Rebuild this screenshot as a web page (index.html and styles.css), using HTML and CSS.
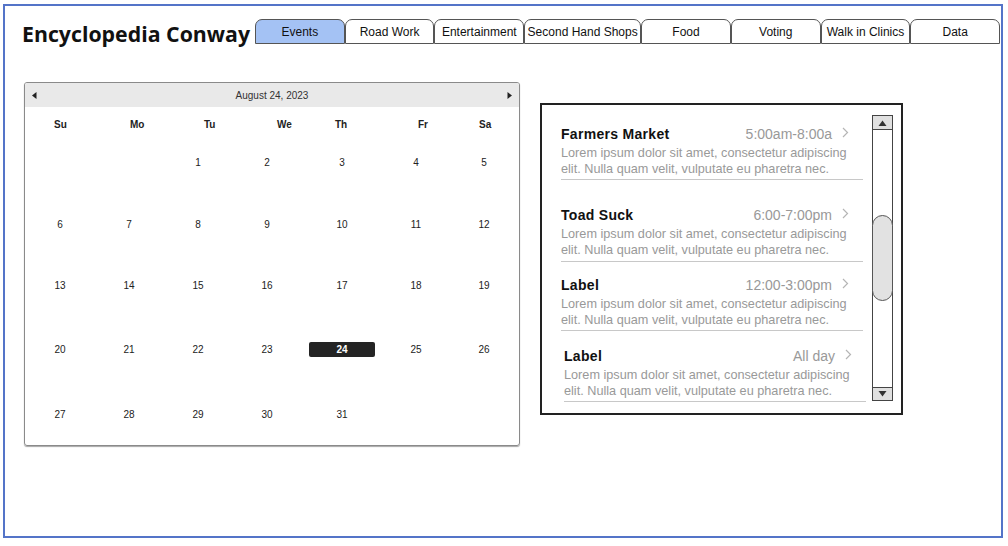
FILE: index.html
```html
<!DOCTYPE html>
<html lang="en">
<head>
    <meta charset="UTF-8">
    <meta name="viewport" content="width=device-width, initial-scale=1.0">
    <title>Encyclopedia Conway</title>
    <link rel="stylesheet" href="styles.css">
</head>
<body>
    <div class="frame">
        <header class="top">
            <h1 class="brand">Encyclopedia Conway</h1>
            <nav class="tabs">
                <a class="tab active">Events</a>
                <a class="tab">Road Work</a>
                <a class="tab">Entertainment</a>
                <a class="tab wide">Second Hand Shops</a>
                <a class="tab">Food</a>
                <a class="tab">Voting</a>
                <a class="tab">Walk in Clinics</a>
                <a class="tab">Data</a>
            </nav>
        </header>

        <main class="content">
            <section class="calendar">
                <div class="cal-head">
                    <svg class="cal-arrow" width="5" height="7" viewBox="0 0 5 7"><path d="M4.5 0 L0 3.5 L4.5 7 Z" fill="#222"/></svg>
                    <span class="cal-title">August 24, 2023</span>
                    <svg class="cal-arrow" width="5" height="7" viewBox="0 0 5 7"><path d="M0.5 0 L5 3.5 L0.5 7 Z" fill="#222"/></svg>
                </div>
                <div class="weekdays">
                    <span>Su</span><span>Mo</span><span>Tu</span><span>We</span><span>Th</span><span>Fr</span><span>Sa</span>
                </div>
                <div class="days">
                    <span></span><span></span><span>1</span><span>2</span><span>3</span><span>4</span><span>5</span>
                    <span>6</span><span>7</span><span>8</span><span>9</span><span>10</span><span>11</span><span>12</span>
                    <span>13</span><span>14</span><span>15</span><span>16</span><span>17</span><span>18</span><span>19</span>
                    <span>20</span><span>21</span><span>22</span><span>23</span><span><b class="selected">24</b></span><span>25</span><span>26</span>
                    <span>27</span><span>28</span><span>29</span><span>30</span><span>31</span><span></span><span></span>
                </div>
            </section>

            <section class="events">
                <div class="event-list">
                    <div class="event first">
                        <div class="event-top">
                            <span class="event-name">Farmers Market</span>
                            <span class="event-time">5:00am-8:00a</span>
                            <svg class="chev" width="7" height="11" viewBox="0 0 7 11"><path d="M1 1 L5.5 5.5 L1 10" fill="none" stroke="#b5b5b5" stroke-width="1.2"/></svg>
                        </div>
                        <p class="event-desc">Lorem ipsum dolor sit amet, consectetur adipiscing elit. Nulla quam velit, vulputate eu pharetra nec.</p>
                    </div>
                    <div class="event second">
                        <div class="event-top">
                            <span class="event-name">Toad Suck</span>
                            <span class="event-time">6:00-7:00pm</span>
                            <svg class="chev" width="7" height="11" viewBox="0 0 7 11"><path d="M1 1 L5.5 5.5 L1 10" fill="none" stroke="#b5b5b5" stroke-width="1.2"/></svg>
                        </div>
                        <p class="event-desc">Lorem ipsum dolor sit amet, consectetur adipiscing elit. Nulla quam velit, vulputate eu pharetra nec.</p>
                    </div>
                    <div class="event">
                        <div class="event-top">
                            <span class="event-name">Label</span>
                            <span class="event-time">12:00-3:00pm</span>
                            <svg class="chev" width="7" height="11" viewBox="0 0 7 11"><path d="M1 1 L5.5 5.5 L1 10" fill="none" stroke="#b5b5b5" stroke-width="1.2"/></svg>
                        </div>
                        <p class="event-desc">Lorem ipsum dolor sit amet, consectetur adipiscing elit. Nulla quam velit, vulputate eu pharetra nec.</p>
                    </div>
                    <div class="event shifted">
                        <div class="event-top">
                            <span class="event-name">Label</span>
                            <span class="event-time">All day</span>
                            <svg class="chev" width="7" height="11" viewBox="0 0 7 11"><path d="M1 1 L5.5 5.5 L1 10" fill="none" stroke="#b5b5b5" stroke-width="1.2"/></svg>
                        </div>
                        <p class="event-desc">Lorem ipsum dolor sit amet, consectetur adipiscing elit. Nulla quam velit, vulputate eu pharetra nec.</p>
                    </div>
                </div>

                <div class="scrollbar">
                    <div class="sb-btn up">
                        <svg width="9" height="6" viewBox="0 0 9 6"><path d="M0.5 6 L4.5 0.5 L8.5 6 Z" fill="#333"/></svg>
                    </div>
                    <div class="sb-track">
                        <div class="sb-thumb"></div>
                    </div>
                    <div class="sb-btn down">
                        <svg width="9" height="6" viewBox="0 0 9 6"><path d="M0.5 0 L4.5 5.5 L8.5 0 Z" fill="#333"/></svg>
                    </div>
                </div>
            </section>
        </main>
    </div>
</body>
</html>
```

FILE: styles.css
```css
* {
    margin: 0;
    padding: 0;
    box-sizing: border-box;
}

body {
    background: white;
    font-family: 'Liberation Sans', Arial, sans-serif;
    color: #222;
}

.frame {
    width: 1000px;
    height: 534px;
    margin: 4px 0 0 3px;
    border: 2px solid #5474c8;
}

/* header: title + tabs */
.top {
    display: flex;
    align-items: flex-end;
    padding: 13px 1px 0 17px;
}

.brand {
    font-family: 'Open Sans', sans-serif;
    font-size: 21.3px;
    font-weight: 700;
    color: #111;
    line-height: 26px;
    margin-bottom: -3px;
    width: 233px;
    white-space: nowrap;
}

.tabs {
    display: flex;
    flex: 1;
}

.tab {
    flex: 1 1 0;
    height: 25px;
    line-height: 24px;
    text-align: center;
    font-size: 12px;
    color: #111;
    background: white;
    border: 1px solid #555;
    border-radius: 7px 7px 0 0;
    white-space: nowrap;
}

.tab.wide {
    flex: 0 0 117px;
}

.tab.active {
    background: #a4c2f4;
}

/* main area */
.content {
    display: flex;
    align-items: flex-start;
    padding: 38px 0 0 19px;
}

.calendar {
    width: 496px;
    border: 1px solid #8a8a8a;
    border-radius: 3px;
    box-shadow: 0 1px 1px rgba(0, 0, 0, 0.35);
}

.cal-head {
    display: flex;
    align-items: center;
    justify-content: space-between;
    height: 24px;
    padding: 0 7px;
    background: #e9e9e9;
    border-radius: 2px 2px 0 0;
}

.cal-title {
    font-size: 10px;
    color: #333;
}

.weekdays {
    display: grid;
    grid-template-columns: 76px 74px 73px 58px 83px 61px 1fr;
    padding: 12px 0 0 29px;
    font-size: 10px;
    font-weight: 700;
    line-height: 12px;
    color: #222;
}

.days {
    display: grid;
    grid-template-columns: 70px 68px 70px 68px 82px 66px 1fr;
    grid-template-rows: 62px 62px 60px 68px 62px;
    align-items: center;
    justify-items: center;
    font-size: 10px;
    color: #222;
}

.selected {
    display: inline-block;
    width: 66px;
    height: 15px;
    line-height: 15px;
    text-align: center;
    background: #242424;
    color: white;
    border-radius: 2px;
}

/* event list panel */
.events {
    display: flex;
    width: 363px;
    height: 312px;
    margin: 21px 0 0 20px;
    border: 2px solid #222;
    overflow: hidden;
}

.event-list {
    width: 302px;
    margin-left: 19px;
}

.event {
    padding: 14px 0 2px;
    border-bottom: 1px solid #c8c8c8;
}

.event.first {
    padding-top: 20px;
}

.event.second {
    padding-top: 26px;
    padding-bottom: 3px;
}

.event.shifted {
    padding-top: 16px;
    margin-left: 3px;
    margin-right: -3px;
}

.event-top {
    display: flex;
    align-items: center;
    height: 18px;
    margin-bottom: 2px;
    padding-right: 14px;
}

.event-name {
    flex: 1;
    font-size: 14px;
    font-weight: 700;
    letter-spacing: 0.3px;
    color: #111;
}

.event-time {
    font-size: 14px;
    color: #999;
}

.chev {
    margin: -4px 0 0 10px;
}

.event-desc {
    font-size: 12.7px;
    line-height: 16px;
    color: #999;
}

/* fake scrollbar */
.scrollbar {
    display: flex;
    flex-direction: column;
    flex: none;
    width: 21px;
    height: 286px;
    margin: 10px 0 0 9px;
}

.sb-btn {
    display: flex;
    align-items: center;
    justify-content: center;
    height: 15px;
    background: #e0e0e0;
    border: 1px solid #444;
}

.sb-btn.down {
    height: 14px;
}

.sb-track {
    flex: 1;
    border-left: 1px solid #444;
    border-right: 1px solid #444;
}

.sb-thumb {
    height: 86px;
    margin: 85px -1px 0;
    background: #e2e2e2;
    border: 1px solid #555;
    border-radius: 11px;
}
```
